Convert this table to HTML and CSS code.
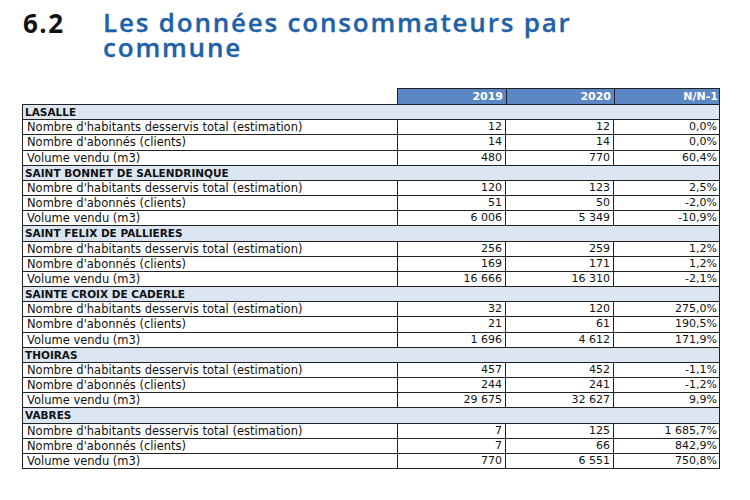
FILE: index.html
```html
<!DOCTYPE html>
<html lang="fr">
<head>
<meta charset="utf-8">
<title>6.2 Les données consommateurs par commune</title>
<link rel="stylesheet" href="styles.css">
</head>
<body>
<header class="heading">
  <span class="num">6.2</span>
  <h1 class="title">Les données consommateurs par<br>commune</h1>
</header>

<section class="table">
  <div class="head">
    <div class="hcell">2019</div>
    <div class="hcell">2020</div>
    <div class="hcell">N/N-1</div>
  </div>
  <div class="body">
    <div class="group">LASALLE</div>
    <div class="row"><div class="label">Nombre d'habitants desservis total (estimation)</div><div class="val">12</div><div class="val">12</div><div class="val">0,0%</div></div>
    <div class="row"><div class="label">Nombre d'abonnés (clients)</div><div class="val">14</div><div class="val">14</div><div class="val">0,0%</div></div>
    <div class="row"><div class="label">Volume vendu (m3)</div><div class="val">480</div><div class="val">770</div><div class="val">60,4%</div></div>

    <div class="group">SAINT BONNET DE SALENDRINQUE</div>
    <div class="row"><div class="label">Nombre d'habitants desservis total (estimation)</div><div class="val">120</div><div class="val">123</div><div class="val">2,5%</div></div>
    <div class="row"><div class="label">Nombre d'abonnés (clients)</div><div class="val">51</div><div class="val">50</div><div class="val">-2,0%</div></div>
    <div class="row"><div class="label">Volume vendu (m3)</div><div class="val">6 006</div><div class="val">5 349</div><div class="val">-10,9%</div></div>

    <div class="group">SAINT FELIX DE PALLIERES</div>
    <div class="row"><div class="label">Nombre d'habitants desservis total (estimation)</div><div class="val">256</div><div class="val">259</div><div class="val">1,2%</div></div>
    <div class="row"><div class="label">Nombre d'abonnés (clients)</div><div class="val">169</div><div class="val">171</div><div class="val">1,2%</div></div>
    <div class="row"><div class="label">Volume vendu (m3)</div><div class="val">16 666</div><div class="val">16 310</div><div class="val">-2,1%</div></div>

    <div class="group">SAINTE CROIX DE CADERLE</div>
    <div class="row"><div class="label">Nombre d'habitants desservis total (estimation)</div><div class="val">32</div><div class="val">120</div><div class="val">275,0%</div></div>
    <div class="row"><div class="label">Nombre d'abonnés (clients)</div><div class="val">21</div><div class="val">61</div><div class="val">190,5%</div></div>
    <div class="row"><div class="label">Volume vendu (m3)</div><div class="val">1 696</div><div class="val">4 612</div><div class="val">171,9%</div></div>

    <div class="group">THOIRAS</div>
    <div class="row"><div class="label">Nombre d'habitants desservis total (estimation)</div><div class="val">457</div><div class="val">452</div><div class="val">-1,1%</div></div>
    <div class="row"><div class="label">Nombre d'abonnés (clients)</div><div class="val">244</div><div class="val">241</div><div class="val">-1,2%</div></div>
    <div class="row"><div class="label">Volume vendu (m3)</div><div class="val">29 675</div><div class="val">32 627</div><div class="val">9,9%</div></div>

    <div class="group">VABRES</div>
    <div class="row"><div class="label">Nombre d'habitants desservis total (estimation)</div><div class="val">7</div><div class="val">125</div><div class="val">1 685,7%</div></div>
    <div class="row"><div class="label">Nombre d'abonnés (clients)</div><div class="val">7</div><div class="val">66</div><div class="val">842,9%</div></div>
    <div class="row"><div class="label">Volume vendu (m3)</div><div class="val">770</div><div class="val">6 551</div><div class="val">750,8%</div></div>
  </div>
</section>
</body>
</html>
```

FILE: styles.css
```css
* { box-sizing: border-box; }

html, body {
  margin: 0;
  padding: 0;
  background: #ffffff;
}

body {
  width: 750px;
  height: 500px;
  overflow: hidden;
  font-family: "Open Sans", "DejaVu Sans", sans-serif;
  color: #111;
}

.heading {
  display: flex;
  align-items: flex-start;
  padding: 10px 0 0 23px;
}

.num {
  width: 80px;
  font-size: 26px;
  font-weight: 700;
  line-height: 27px;
  letter-spacing: 1.5px;
  color: #111;
}

.title {
  margin: 0;
  font-size: 26px;
  font-weight: 600;
  line-height: 25px;
  letter-spacing: 1.8px;
  color: #1f62a9;
  -webkit-text-stroke: 0.3px #1f62a9;
}

.table {
  margin: 28px 0 0 22px;
  width: 698px;
  font-family: "DejaVu Sans", "Open Sans", sans-serif;
  font-size: 11px;
}

.head {
  display: grid;
  grid-template-columns: 108px 108px 107px;
  margin-left: 375px;
  height: 16px;
  border-top: 1px solid #222;
  border-left: 1px solid #222;
  border-right: 1px solid #222;
  background: #5b87c4;
}

.hcell {
  color: #fff;
  font-weight: 700;
  text-align: right;
  padding-right: 3px;
  line-height: 15px;
}

.hcell + .hcell {
  border-left: 1px solid #222;
}

.body {
  display: flex;
  flex-direction: column;
  height: 365px;
  border: 1px solid #222;
}

.group,
.row {
  flex: 1 1 0;
  border-bottom: 1px solid #222;
}

.group:last-child,
.row:last-child {
  border-bottom: none;
}

.group {
  background: #dce6f2;
  font-weight: 700;
  font-size: 10.5px;
  padding-left: 2px;
  line-height: 14px;
}

.row {
  display: grid;
  grid-template-columns: 374px 108px 108px 107px;
  line-height: 14px;
}

.label {
  padding-left: 4px;
  font-size: 11.5px;
}

.val {
  text-align: right;
  padding-right: 3px;
  border-left: 1px solid #222;
}
```
